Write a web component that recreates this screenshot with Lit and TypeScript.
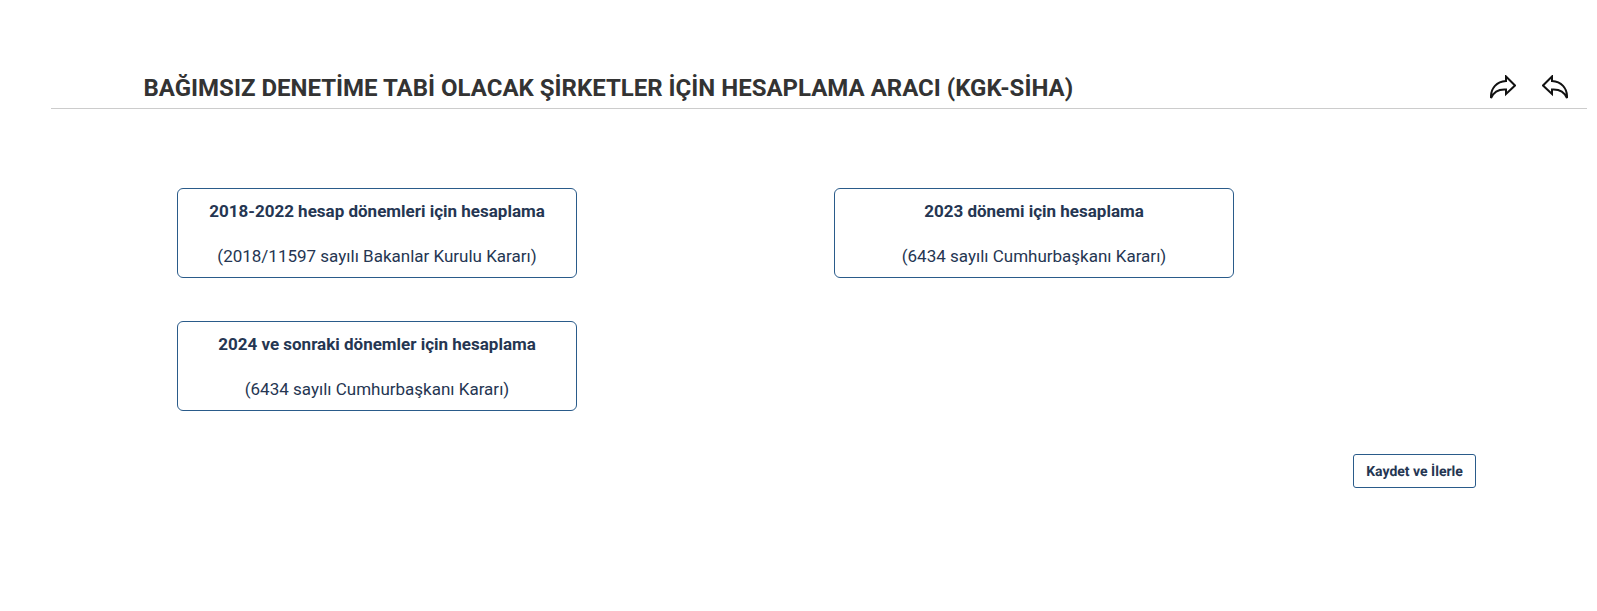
import { LitElement, html, css } from "lit";
import { customElement } from "lit/decorators.js";

@customElement("app-root")
export class AppRoot extends LitElement {
  static styles = css`
    :host { display: block; font-family: Roboto, "Liberation Sans", sans-serif; background: #fff; min-height: 611px; }
    .header { margin: 0 10px 0 51px; padding: 0 19px 0 92.5px; height: 109px; box-sizing: border-box; border-bottom: 1px solid #ccc; display: flex; align-items: flex-end; justify-content: space-between; }
    h1 { margin: 0 0 6px; font-size: 24px; line-height: 28px; font-weight: 700; color: #333; }
    .icons { display: flex; gap: 26px; margin: 0 0 9px 0; }
    .icons svg { width: 26px; height: 24px; display: block; }
    .grid { display: grid; grid-template-columns: 400px 400px; column-gap: 257px; row-gap: 43px; margin: 79px 0 0 177px; }
    .card { box-sizing: border-box; height: 90px; border: 1px solid #2a5b8a; border-radius: 6px; background: #fff; text-align: center; color: #253652; font-size: 17px; line-height: 23px; padding: 11px 5px 0; }
    .card b { display: block; font-weight: 700; margin-bottom: 22px; }
    .actions { display: flex; justify-content: flex-end; margin: 43px 121px 0 0; }
    .btn { box-sizing: border-box; width: 123px; height: 34px; border: 1px solid #2a5b8a; border-radius: 3px; background: #fff; color: #253652; font: 700 14px Roboto, sans-serif; padding: 1px 0 0; text-rendering: geometricPrecision; }
  `;
  render() {
    const cards = [
      ["2018-2022 hesap dönemleri için hesaplama", "(2018/11597 sayılı Bakanlar Kurulu Kararı)"],
      ["2023 dönemi için hesaplama", "(6434 sayılı Cumhurbaşkanı Kararı)"],
      ["2024 ve sonraki dönemler için hesaplama", "(6434 sayılı Cumhurbaşkanı Kararı)"],
    ];
    const arrow = "M10 1.5 L1 10.5 L10 19 V14.5 C17 14 22 16 25 23 C25.5 13 19 6.5 10 6 Z";
    return html`
      <div class="header">
        <h1>BAĞIMSIZ DENETİME TABİ OLACAK ŞİRKETLER İÇİN HESAPLAMA ARACI (KGK-SİHA)</h1>
        <div class="icons">
          <svg viewBox="0 0 26 24"><path transform="translate(26 0) scale(-1 1)" d=${arrow} fill="none" stroke="#111" stroke-width="2" stroke-linejoin="miter"/></svg>
          <svg viewBox="0 0 26 24"><path d=${arrow} fill="none" stroke="#111" stroke-width="2" stroke-linejoin="miter"/></svg>
        </div>
      </div>
      <div class="grid">
        ${cards.map(([a, b]) => html`<div class="card"><b>${a}</b><span>${b}</span></div>`)}
      </div>
      <div class="actions"><button class="btn">Kaydet ve İlerle</button></div>
    `;
  }
}
